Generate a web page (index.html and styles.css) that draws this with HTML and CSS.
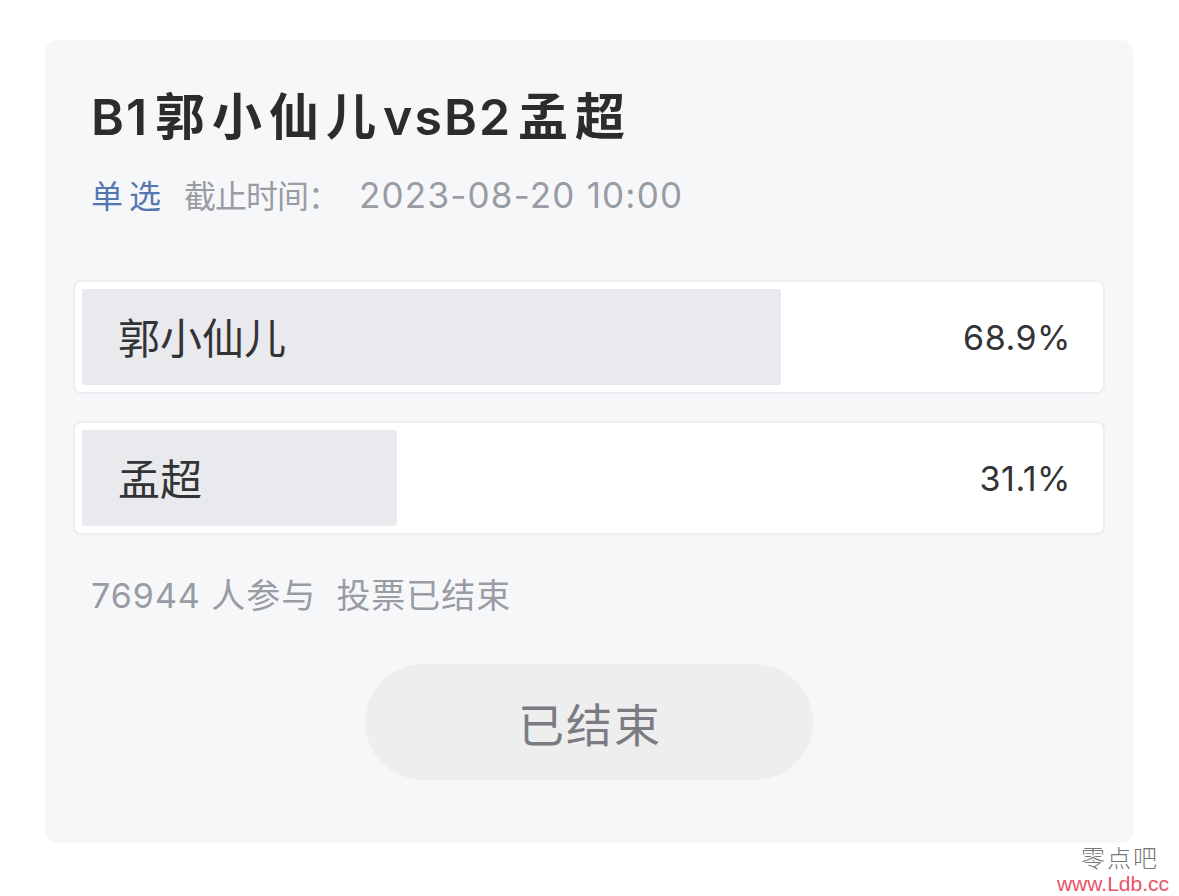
FILE: index.html
```html
<!DOCTYPE html>
<html lang="zh-CN">
<head>
<meta charset="utf-8">
<link rel="stylesheet" href="styles.css">
</head>
<body>
<div class="card">
  <h1 class="title"><span class="lat">B1</span>郭小仙儿<span class="lat">vsB2</span>孟超</h1>
  <div class="meta"><span class="type">单选</span><span class="deadline">截止时间：<span class="date">2023-08-20 10:00</span></span></div>
  <div class="options">
    <div class="option">
      <div class="track"><div class="bar" style="width:68.9%"></div></div>
      <span class="label">郭小仙儿</span>
      <span class="pct">68.9%</span>
    </div>
    <div class="option">
      <div class="track"><div class="bar" style="width:31.1%"></div></div>
      <span class="label">孟超</span>
      <span class="pct">31.1%</span>
    </div>
  </div>
  <div class="stats"><span>76944 人参与</span><span class="status">投票已结束</span></div>
  <div class="actions"><div class="btn">已结束</div></div>
</div>
<div class="watermark">
  <div class="wm-cn">零点吧</div>
  <div class="wm-url">www.Ldb.cc</div>
</div>
</body>
</html>
```
FILE: styles.css
```css
html, body {
  margin: 0;
  padding: 0;
  background: #ffffff;
}
body {
  font-family: "Inter", "Noto Sans CJK SC", sans-serif;
  position: relative;
  height: 896px;
  overflow: hidden;
}
.card {
  margin: 40px 46px 0 45px;
  background: #f6f7f9;
  border-radius: 12px;
  padding: 44px 28px 62px;
  box-sizing: border-box;
  height: 803px;
}
.title {
  margin: 0;
  padding: 0 18px;
  font-size: 50px;
  line-height: 66px;
  font-weight: 600;
  color: #2c2c2e;
  letter-spacing: 7px;
}
.title .lat {
  font-size: 50px;
  letter-spacing: 2px;
  margin-right: 6px;
}
.meta {
  margin-top: 23px;
  padding: 0 18px;
  font-size: 32px;
  line-height: 44px;
  color: #9a9ca4;
  display: flex;
  align-items: baseline;
  gap: 17px;
}
.type {
  color: #5676b2;
  letter-spacing: 6px;
}
.deadline {
  letter-spacing: -1px;
}
.date {
  font-size: 35px;
  letter-spacing: 1.2px;
  margin-left: 20px;
}
.options {
  margin-top: 61px;
  display: flex;
  flex-direction: column;
  gap: 27px;
}
.option {
  position: relative;
  height: 114px;
  box-sizing: border-box;
  background: #ffffff;
  border: 2px solid #eceef1;
  border-radius: 8px;
  padding: 7px;
  display: flex;
  align-items: center;
}
.track {
  position: absolute;
  left: 7px;
  top: 7px;
  right: 7px;
  bottom: 7px;
}
.bar {
  height: 100%;
  background: #e9eaed;
  border-radius: 2px;
}
.label {
  position: relative;
  padding-left: 36px;
  font-size: 42px;
  color: #333336;
  flex: 1;
  margin-top: -4px;
}
.pct {
  position: relative;
  padding-right: 25px;
  font-size: 34px;
  letter-spacing: 0.5px;
  color: #333336;
}
.stats {
  margin-top: 38px;
  padding: 0 18px;
  font-size: 34px;
  line-height: 46px;
  letter-spacing: 1px;
  color: #9a9ca4;
  display: flex;
  gap: 20px;
}
.actions {
  margin-top: 45px;
  display: flex;
  justify-content: center;
}
.btn {
  width: 448px;
  height: 116px;
  border-radius: 58px;
  background: #eeeeef;
  color: #7b7c81;
  font-size: 46px;
  letter-spacing: 2px;
  padding-left: 2px;
  box-sizing: border-box;
  display: flex;
  align-items: center;
  justify-content: center;
}
.watermark {
  position: absolute;
  right: 10px;
  bottom: 2px;
  text-align: center;
  line-height: 1;
}
.wm-cn {
  font-family: "Liberation Serif", "Noto Sans CJK SC", serif;
  font-size: 24px;
  font-weight: 300;
  color: #777;
  letter-spacing: 2px;
  margin-bottom: 2px;
  padding-left: 14px;
}
.wm-url {
  font-family: "Liberation Sans", sans-serif;
  font-size: 21px;
  color: #ea5266;
}
```
